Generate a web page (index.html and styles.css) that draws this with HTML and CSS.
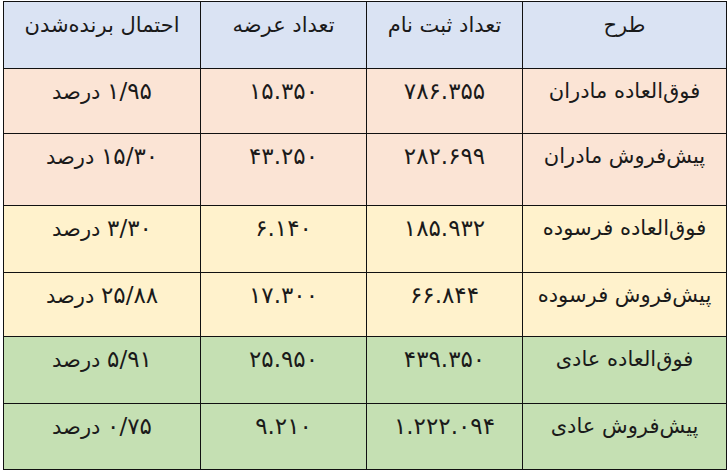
FILE: index.html
```html
<!DOCTYPE html>
<html lang="fa" dir="rtl">
<head>
<meta charset="utf-8">
<title>طرح‌های فروش</title>
<link rel="stylesheet" href="styles.css">
</head>
<body>
<table class="plans">
  <colgroup>
    <col class="c-plan">
    <col class="c-reg">
    <col class="c-offer">
    <col class="c-prob">
  </colgroup>
  <thead>
    <tr class="r-head"><th>طرح</th><th>تعداد ثبت نام</th><th>تعداد عرضه</th><th>احتمال برنده‌شدن</th></tr>
  </thead>
  <tbody>
    <tr class="r1 mothers"><td>فوق‌العاده مادران</td><td><span class="num">۷۸۶.۳۵۵</span></td><td><span class="num">۱۵.۳۵۰</span></td><td><span class="num">۱/۹۵</span> درصد</td></tr>
    <tr class="r2 mothers"><td>پیش‌فروش مادران</td><td><span class="num">۲۸۲.۶۹۹</span></td><td><span class="num">۴۳.۲۵۰</span></td><td><span class="num">۱۵/۳۰</span> درصد</td></tr>
    <tr class="r3 worn"><td>فوق‌العاده فرسوده</td><td><span class="num">۱۸۵.۹۳۲</span></td><td><span class="num">۶.۱۴۰</span></td><td><span class="num">۳/۳۰</span> درصد</td></tr>
    <tr class="r4 worn"><td>پیش‌فروش فرسوده</td><td><span class="num">۶۶.۸۴۴</span></td><td><span class="num">۱۷.۳۰۰</span></td><td><span class="num">۲۵/۸۸</span> درصد</td></tr>
    <tr class="r5 regular"><td>فوق‌العاده عادی</td><td><span class="num">۴۳۹.۳۵۰</span></td><td><span class="num">۲۵.۹۵۰</span></td><td><span class="num">۵/۹۱</span> درصد</td></tr>
    <tr class="r6 regular"><td>پیش‌فروش عادی</td><td><span class="num">۱.۲۲۲.۰۹۴</span></td><td><span class="num">۹.۲۱۰</span></td><td><span class="num">۰/۷۵</span> درصد</td></tr>
  </tbody>
</table>
</body>
</html>
```

FILE: styles.css
```css
html, body {
  margin: 0;
  padding: 0;
  background: #ffffff;
}

body {
  font-family: "DejaVu Sans", "Noto Sans", sans-serif;
  color: #1a1a1a;
}

.plans {
  direction: rtl;
  border-collapse: collapse;
  table-layout: fixed;
  width: 723px;
  margin: 1px 0 0 2px;
}

.c-plan { width: 204px; }
.c-reg { width: 156px; }
.c-offer { width: 166px; }
.c-prob { width: 197px; }

.plans th,
.plans td {
  border: 1.5px solid #111111;
  text-align: center;
  vertical-align: top;
  padding: 8px 4px 0;
  font-size: 21px;
  font-weight: normal;
  line-height: 28px;
  white-space: nowrap;
}

.num {
  font-size: 23px;
  letter-spacing: 0.5px;
}

.r-head { background: #dae3f3; height: 67px; }
.r-head th { padding-top: 9px; }

.mothers { background: #fbe4d5; }
.worn { background: #fff2cc; }
.regular { background: #c5e0b3; }

.r1 { height: 65px; }
.r2 { height: 72px; }
.r3 { height: 67px; }
.r4 { height: 64px; }
.r5 { height: 67px; }
.r6 { height: 66px; }
```
